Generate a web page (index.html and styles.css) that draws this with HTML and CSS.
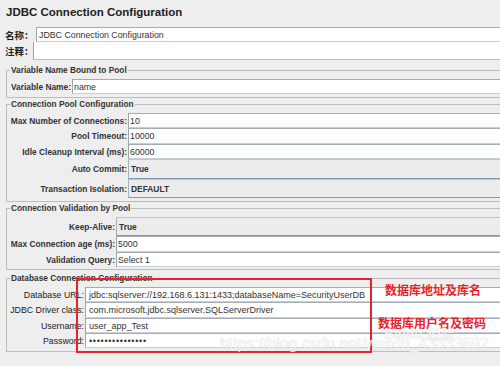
FILE: index.html
```html
<!DOCTYPE html>
<html>
<head>
<meta charset="utf-8">
<link rel="stylesheet" href="styles.css">
</head>
<body>
<div class="page">
  <div class="title">JDBC Connection Configuration</div>
  <div class="meta">
    <div class="mrow mname"><span class="mlbl">名称：</span><div class="field">JDBC Connection Configuration</div></div>
    <div class="mrow mcomment"><span class="mlbl">注释：</span><div class="field"></div></div>
  </div>

  <fieldset class="group g1">
    <legend>Variable Name Bound to Pool</legend>
    <div class="grid">
      <label class="lbl">Variable Name:</label><div class="field h15">name</div>
    </div>
  </fieldset>

  <fieldset class="group g2">
    <legend>Connection Pool Configuration</legend>
    <div class="grid">
      <label class="lbl">Max Number of Connections:</label><div class="field h15">10</div>
      <label class="lbl">Pool Timeout:</label><div class="field h16">10000</div>
      <label class="lbl">Idle Cleanup Interval (ms):</label><div class="field h15">60000</div>
      <label class="lbl">Auto Commit:</label><div class="combo h20">True</div>
      <label class="lbl">Transaction Isolation:</label><div class="combo h19">DEFAULT</div>
    </div>
  </fieldset>

  <fieldset class="group g3">
    <legend>Connection Validation by Pool</legend>
    <div class="grid">
      <label class="lbl">Keep-Alive:</label><div class="combo h19">True</div>
      <label class="lbl">Max Connection age (ms):</label><div class="field h16">5000</div>
      <label class="lbl">Validation Query:</label><div class="field h15">Select 1</div>
    </div>
  </fieldset>

  <fieldset class="group g4">
    <legend>Database Connection Configuration</legend>
    <div class="grid">
      <label class="lbl">Database URL:</label><div class="field h15">jdbc:sqlserver://192.168.6.131:1433;databaseName=SecurityUserDB</div>
      <label class="lbl">JDBC Driver class:</label><div class="field h16">com.microsoft.jdbc.sqlserver.SQLServerDriver</div>
      <label class="lbl">Username:</label><div class="field h15">user_app_Test</div>
      <label class="lbl">Password:</label><div class="field h15 pw">•••••••••••••••</div>
    </div>
  </fieldset>

  <div class="redbox"></div>
  <div class="note note1">数据库地址及库名</div>
  <div class="note note2">数据库用户名及密码</div>
  <div class="wm wm-bai">Bai<span class="paw">du</span> 经验</div>
  <div class="wm wm-url">https://blog.csdn.net/weixin_43333692</div>
</div>
</body>
</html>
```

FILE: styles.css
```css
html, body {
  margin: 0;
  padding: 0;
  background: #eeeeee;
  overflow: hidden;
}
body {
  width: 500px;
  height: 366px;
  font-family: "Liberation Sans", Arial, "Noto Sans CJK SC", sans-serif;
  color: #333333;
}
.page {
  position: relative;
  width: 500px;
  height: 366px;
  overflow: hidden;
}
.title {
  height: 27px;
  box-sizing: border-box;
  padding: 5px 6px 0 6px;
  font-size: 11.5px;
  line-height: 14px;
  font-weight: bold;
  color: #222222;
}
.meta {
  padding-left: 5px;
}
.mrow {
  display: flex;
  align-items: stretch;
}
.mname { height: 15px; }
.mcomment { height: 18px; }
.mlbl {
  font-family: "Noto Sans CJK SC", sans-serif;
  font-weight: bold;
  font-size: 9.5px;
  display: flex;
  align-items: center;
  color: #1e1e1e;
  white-space: nowrap;
}
.mname .mlbl { width: 31px; }
.mcomment .mlbl { width: 28px; }
.mrow .field { flex: 1; }
.mcomment .field { border-top: none; border-bottom: 1px solid #b8bfc6; }

.field {
  box-sizing: border-box;
  background: #ffffff;
  border-top: 1px solid #a4adb7;
  border-bottom: 1px solid #c9cfd6;
  border-left: 1px solid #9aa4ae;
  font-size: 8.8px;
  padding-left: 1px;
  display: flex;
  align-items: center;
  white-space: nowrap;
  color: #333333;
}
.mname .field { padding-left: 2px; }
.combo {
  box-sizing: border-box;
  background: #ececec;
  border-top: 1px solid #b8c6d6;
  border-bottom: 1px solid #8597ac;
  border-left: 1px solid #a3b1c1;
  font-size: 8.4px;
  font-weight: bold;
  padding-left: 2px;
  display: flex;
  align-items: center;
  color: #333333;
}
.h15 { height: 15px; }
.h16 { height: 16px; }
.h19 { height: 19px; }
.h20 { height: 20px; }

.group {
  margin: 0 0 0 6px;
  padding: 3px 0 3px 3px;
  border: 1px solid #bdbdbd;
  border-right: none;
  min-width: 0;
}
.group legend {
  padding: 0 1px;
  margin: 0;
  font-size: 8.3px;
  line-height: 12px;
  font-weight: bold;
  color: #333333;
}
.g1 { margin-top: 4px; }
.g3 { padding-bottom: 2px; }
.g4 { margin-top: 2px; }

.grid {
  display: grid;
  grid-template-columns: var(--lw) 1fr;
}
.g1 .grid { --lw: 62px; }
.g2 .grid { --lw: 118px; }
.g3 .grid { --lw: 106px; }
.g4 .grid { --lw: 75px; }

.lbl {
  font-size: 8.4px;
  font-weight: bold;
  text-align: right;
  padding-right: 1px;
  white-space: nowrap;
  align-self: center;
  color: #333333;
}
.g4 .lbl {
  font-weight: normal;
  font-size: 8.8px;
  color: #222222;
}
.g4 .field { padding-left: 3px; font-size: 9px; }
.pw { letter-spacing: 0.7px; font-size: 8px; }

.redbox {
  position: absolute;
  left: 76px;
  top: 278px;
  width: 296px;
  height: 75px;
  box-sizing: border-box;
  border: 2px solid #e4232b;
}
.note {
  position: absolute;
  font-family: "Noto Sans CJK SC", sans-serif;
  font-size: 12px;
  line-height: 14px;
  color: #e8232a;
  font-weight: 600;
  white-space: nowrap;
}
.note1 { left: 385px; top: 283px; }
.note2 { left: 378px; top: 316px; }
.wm {
  position: absolute;
  color: rgba(255, 255, 255, 0.8);
  text-shadow: 0 0 1px rgba(120, 120, 120, 0.35);
  white-space: nowrap;
}
.wm-bai {
  left: 384px;
  top: 326px;
  font-size: 14px;
  font-weight: bold;
  line-height: 16px;
  font-family: "Liberation Sans", "Noto Sans CJK SC", sans-serif;
}
.wm-url {
  left: 220px;
  top: 335px;
  font-size: 15.8px;
  line-height: 18px;
  font-family: "Liberation Sans", Arial, sans-serif;
}
```
